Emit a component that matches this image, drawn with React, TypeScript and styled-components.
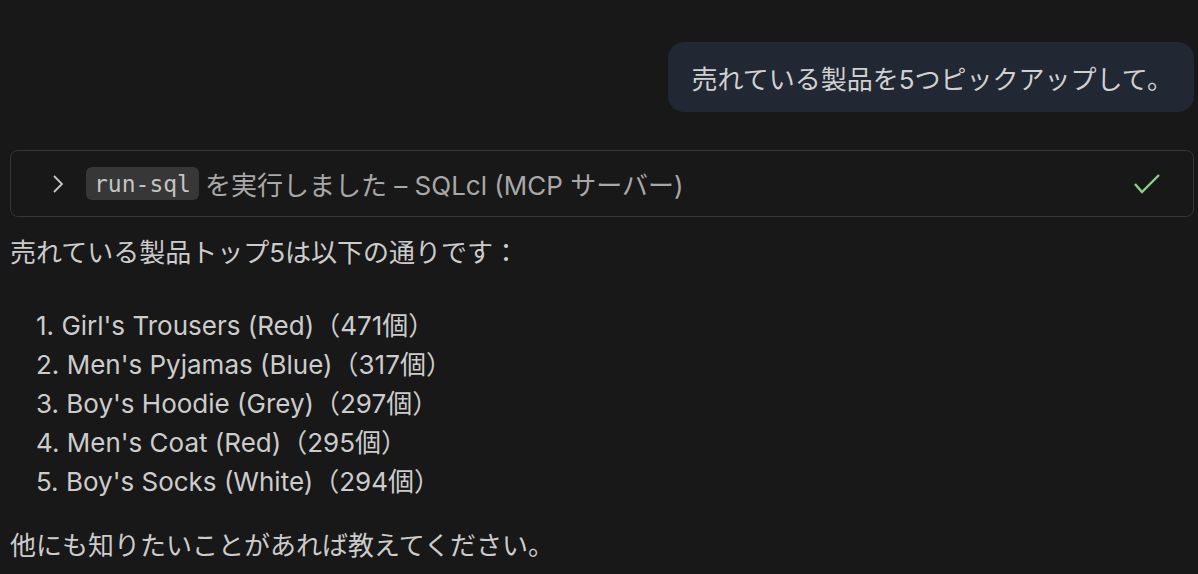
import React from "react";
import styled, { createGlobalStyle } from "styled-components";

const GlobalStyle = createGlobalStyle`
  html, body {
    margin: 0;
    padding: 0;
    background: #181818;
  }
  body {
    font-family: Inter, "Noto Sans CJK JP", sans-serif;
    color: #cccccc;
  }
`;

const Page = styled.div`
  display: flex;
  flex-direction: column;
  padding: 42px 4px 0 10px;
  height: 574px;
  box-sizing: border-box;
  overflow: hidden;
`;

const UserBubble = styled.div`
  align-self: flex-end;
  display: flex;
  align-items: center;
  height: 70px;
  padding: 0 21px 0 24px;
  border-radius: 16px;
  background: #212733;
  font-size: 26px;
  color: #d0d0d0;
`;

const ToolBox = styled.div`
  display: flex;
  align-items: center;
  margin-top: 38px;
  height: 67px;
  box-sizing: border-box;
  padding: 0 30px 0 40px;
  border: 1px solid #353535;
  border-radius: 8px;
  font-size: 26px;
  color: #a8a8a8;
`;

const Chevron = styled.svg`
  width: 14px;
  height: 20px;
  margin-right: 21px;
  flex-shrink: 0;
`;

const CodePill = styled.span`
  display: inline-flex;
  align-items: center;
  height: 33px;
  padding: 0 8px;
  border-radius: 6px;
  background: #373737;
  font-family: "DejaVu Sans Mono", monospace;
  font-size: 23px;
  color: #c4c4c4;
  margin-right: 6px;
`;

const ToolLabel = styled.span`
  flex: 1;
`;

const Check = styled.svg`
  width: 28px;
  height: 22px;
  margin-right: 2px;
`;

const Para = styled.p<{ $top: number }>`
  margin: ${(p) => p.$top}px 0 0;
  font-size: 26px;
  line-height: 39px;
  color: #cccccc;
`;

const List = styled.ol`
  margin: 34px 0 0;
  padding: 0 0 0 26px;
  list-style: none;
  font-size: 26px;
  line-height: 39px;
  color: #cccccc;
`;

const Item = styled.li``;

const items = [
  "Girl's Trousers (Red)（471個）",
  "Men's Pyjamas (Blue)（317個）",
  "Boy's Hoodie (Grey)（297個）",
  "Men's Coat (Red)（295個）",
  "Boy's Socks (White)（294個）",
];

export default function App() {
  return (
    <>
      <GlobalStyle />
      <Page>
        <UserBubble>売れている製品を5つピックアップして。</UserBubble>
        <ToolBox>
          <Chevron viewBox="0 0 14 20">
            <path d="M3 2 L11 10 L3 18" fill="none" stroke="#c8c8c8" strokeWidth="1.8" />
          </Chevron>
          <CodePill>run-sql</CodePill>
          <ToolLabel>を実行しました – SQLcl (MCP サーバー)</ToolLabel>
          <Check viewBox="0 0 28 22">
            <path d="M2 11 L9 19 L26 2" fill="none" stroke="#89d185" strokeWidth="2.4" />
          </Check>
        </ToolBox>
        <Para $top={16}>売れている製品トップ5は以下の通りです：</Para>
        <List>
          {items.map((t, i) => (
            <Item key={i}>
              {i + 1}. {t}
            </Item>
          ))}
        </List>
        <Para $top={25}>他にも知りたいことがあれば教えてください。</Para>
      </Page>
    </>
  );
}
